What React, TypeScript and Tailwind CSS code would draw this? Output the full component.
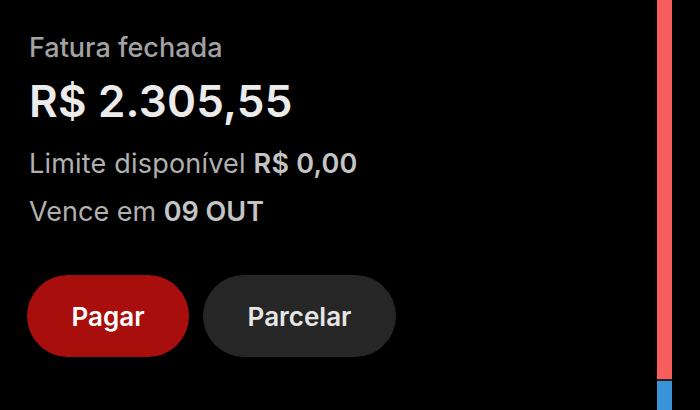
import React from "react";

export default function App() {
  return (
    <div
      className="w-[700px] h-[410px] bg-black flex overflow-hidden"
      style={{ fontFamily: "Inter, 'Noto Sans', sans-serif" }}
    >
      <div className="flex-1 flex flex-col pl-[29px] pt-[32px]">
        <div className="text-[27px] leading-[32px] font-medium text-[#a3a3a3]">
          Fatura fechada
        </div>
        <div className="mt-[11px] text-[44px] leading-[52px] font-semibold text-[#ebebeb] tracking-[0.2px]">
          R$ 2.305,55
        </div>
        <div className="mt-[21px] text-[27px] leading-[32px] text-[#b0b0b0] tracking-[0.2px]">
          Limite disponível <span className="font-semibold text-[#c4c4c4]">R$ 0,00</span>
        </div>
        <div className="mt-[16px] text-[27px] leading-[32px] text-[#b0b0b0]">
          Vence em <span className="font-semibold text-[#c4c4c4]">09 OUT</span>
        </div>
        <div className="mt-[47px] flex gap-[14px] ml-[-2px]">
          <button className="w-[162px] h-[82px] rounded-full bg-[#a80e0c] text-white text-[26px] font-semibold">
            Pagar
          </button>
          <button className="w-[193px] h-[82px] rounded-full bg-[#262626] text-[#e6e6e6] text-[26px] font-semibold">
            Parcelar
          </button>
        </div>
      </div>
      <div className="w-[15px] mr-[28px] flex flex-col">
        <div className="h-[379px] bg-[#f85f5c]" />
        <div className="h-[2px] bg-[#222]" />
        <div className="flex-1 bg-[#3a93d6]" />
      </div>
    </div>
  );
}
